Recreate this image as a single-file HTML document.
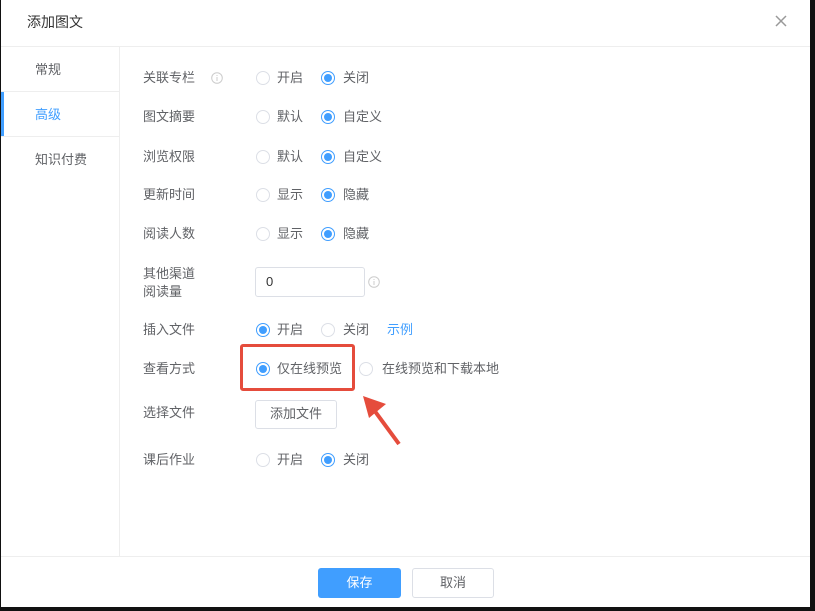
<!DOCTYPE html>
<html><head><meta charset="utf-8"><style>
*{margin:0;padding:0;box-sizing:border-box}
body{width:815px;height:611px;background:#111;position:relative;overflow:hidden;font-family:"Liberation Sans","Noto Sans CJK SC",sans-serif;font-size:13px;color:#606266}
.dlg{position:absolute;left:1px;top:0;width:809px;height:607px;background:#fff}
.a{position:absolute;white-space:nowrap}
.r{position:absolute;width:14px;height:14px;border:1px solid #dcdfe6;border-radius:50%;background:#fff}
.r.on{border-color:#409eff}
.r.on::after{content:"";position:absolute;left:2px;top:2px;width:8px;height:8px;border-radius:50%;background:#409eff}
.t{position:absolute;line-height:16px;white-space:nowrap;color:#606266}
</style></head><body><div class="dlg">
<div class="a" style="left:26px;top:12px;font-size:14px;color:#333">添加图文</div>
<svg class="a" style="left:773px;top:14px" width="14" height="14"><path d="M2 2L12 12M12 2L2 12" stroke="#999" stroke-width="1.5"/></svg>
<div class="a" style="left:0;top:46px;width:809px;height:1px;background:#eee"></div>
<div class="a" style="left:118px;top:47px;width:1px;height:509px;background:#eee"></div>
<div class="a" style="left:0;top:91px;width:118px;height:1px;background:#eee"></div>
<div class="a" style="left:0;top:136px;width:118px;height:1px;background:#eee"></div>
<div class="a" style="left:0;top:92px;width:3px;height:44px;background:#409eff"></div>
<div class="t" style="left:34px;top:62px">常规</div>
<div class="t" style="left:34px;top:107px;color:#409eff">高级</div>
<div class="t" style="left:34px;top:152px">知识付费</div>

<div class="t" style="left:142px;top:70px">关联专栏</div>
<svg class="a" style="left:210px;top:72px" width="12" height="12"><circle cx="6" cy="6" r="5.3" fill="none" stroke="#ccc"/><path d="M6 5v4M6 3v1" stroke="#ccc"/></svg>
<div class="t" style="left:142px;top:109px">图文摘要</div>
<div class="t" style="left:142px;top:149px">浏览权限</div>
<div class="t" style="left:142px;top:187px">更新时间</div>
<div class="t" style="left:142px;top:226px">阅读人数</div>
<div class="t" style="left:142px;top:265px;line-height:18px">其他渠道<br>阅读量</div>
<div class="t" style="left:142px;top:322px">插入文件</div>
<div class="t" style="left:142px;top:361px">查看方式</div>
<div class="t" style="left:142px;top:405px">选择文件</div>
<div class="t" style="left:142px;top:452px">课后作业</div>

<div class="r" style="left:255px;top:71px"></div><div class="t" style="left:276px;top:70px">开启</div>
<div class="r on" style="left:320px;top:71px"></div><div class="t" style="left:342px;top:70px">关闭</div>
<div class="r" style="left:255px;top:110px"></div><div class="t" style="left:276px;top:109px">默认</div>
<div class="r on" style="left:320px;top:110px"></div><div class="t" style="left:342px;top:109px">自定义</div>
<div class="r" style="left:255px;top:150px"></div><div class="t" style="left:276px;top:149px">默认</div>
<div class="r on" style="left:320px;top:150px"></div><div class="t" style="left:342px;top:149px">自定义</div>
<div class="r" style="left:255px;top:188px"></div><div class="t" style="left:276px;top:187px">显示</div>
<div class="r on" style="left:320px;top:188px"></div><div class="t" style="left:342px;top:187px">隐藏</div>
<div class="r" style="left:255px;top:227px"></div><div class="t" style="left:276px;top:226px">显示</div>
<div class="r on" style="left:320px;top:227px"></div><div class="t" style="left:342px;top:226px">隐藏</div>

<div class="a" style="left:254px;top:267px;width:110px;height:30px;border:1px solid #dcdfe6;border-radius:3px"></div>
<div class="t" style="left:265px;top:274px;color:#333">0</div>
<svg class="a" style="left:367px;top:276px" width="12" height="12"><circle cx="6" cy="6" r="5.3" fill="none" stroke="#ccc"/><path d="M6 5v4M6 3v1" stroke="#ccc"/></svg>

<div class="r on" style="left:255px;top:323px"></div><div class="t" style="left:276px;top:322px">开启</div>
<div class="r" style="left:320px;top:323px"></div><div class="t" style="left:342px;top:322px">关闭</div>
<div class="t" style="left:386px;top:322px;color:#409eff">示例</div>

<div class="a" style="left:239px;top:344px;width:115px;height:47px;border:3px solid #e54c3c;border-radius:3px"></div>
<div class="r on" style="left:255px;top:362px"></div><div class="t" style="left:276px;top:361px">仅在线预览</div>
<div class="r" style="left:358px;top:362px"></div><div class="t" style="left:381px;top:361px">在线预览和下载本地</div>
<svg class="a" style="left:355px;top:390px" width="50" height="60"><path d="M43 54L18 20" stroke="#e54c3c" stroke-width="4"/><path d="M7 6L30 14L13 28Z" fill="#e54c3c"/></svg>

<div class="a" style="left:254px;top:400px;width:82px;height:29px;border:1px solid #dcdfe6;border-radius:3px"></div>
<div class="t" style="left:269px;top:406px">添加文件</div>

<div class="r" style="left:255px;top:453px"></div><div class="t" style="left:276px;top:452px">开启</div>
<div class="r on" style="left:320px;top:453px"></div><div class="t" style="left:342px;top:452px">关闭</div>

<div class="a" style="left:0;top:556px;width:809px;height:1px;background:#eee"></div>
<div class="a" style="left:317px;top:568px;width:83px;height:30px;background:#409eff;border-radius:3px;color:#fff;text-align:center;line-height:30px">保存</div>
<div class="a" style="left:411px;top:568px;width:82px;height:30px;border:1px solid #dcdfe6;border-radius:3px;color:#606266;text-align:center;line-height:28px">取消</div>
</div></body></html>
